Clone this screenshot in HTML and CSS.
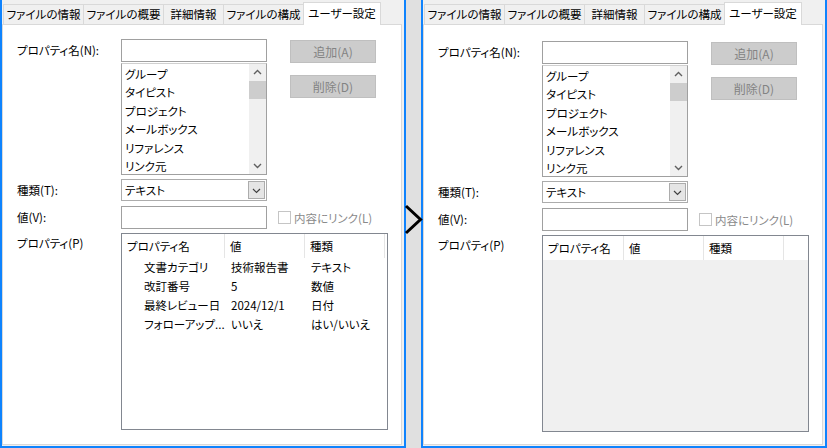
FILE: index.html
```html
<!DOCTYPE html>
<html lang="ja">
<head>
<meta charset="utf-8">
<title>ユーザー設定</title>
<link rel="stylesheet" href="styles.css">
</head>
<body>
  <section class="panel">
    <div class="tabs">
      <div class="tab tab-w80">ファイルの情報</div>
      <div class="tab tab-w80">ファイルの概要</div>
      <div class="tab tab-w60">詳細情報</div>
      <div class="tab tab-w80">ファイルの構成</div>
      <div class="tab tab-active">ユーザー設定</div>
    </div>
    <div class="content">
      <div class="form">
        <div class="label row1">プロパティ名(N):</div>
        <div class="textbox row1"></div>
        <div class="btn btn-add">追加(A)</div>
        <div class="listbox">
          <ul class="listbox-items">
            <li>グループ</li>
            <li>タイピスト</li>
            <li>プロジェクト</li>
            <li>メールボックス</li>
            <li>リファレンス</li>
            <li>リンク元</li>
          </ul>
          <div class="vscroll">
            <div class="vscroll-arrow"><svg width="17" height="17" viewBox="0 0 17 17"><path d="M5 10 L8.5 6.5 L12 10" fill="none" stroke="#606060" stroke-width="1.4"/></svg></div>
            <div class="vscroll-thumb"></div>
            <div class="vscroll-track"></div>
            <div class="vscroll-arrow"><svg width="17" height="17" viewBox="0 0 17 17"><path d="M5 7 L8.5 10.5 L12 7" fill="none" stroke="#606060" stroke-width="1.4"/></svg></div>
          </div>
        </div>
        <div class="btn btn-del">削除(D)</div>
        <div class="label row3">種類(T):</div>
        <div class="combo row3">
          <span class="combo-text">テキスト</span>
          <span class="combo-btn"><svg width="15" height="17" viewBox="0 0 15 17"><path d="M4 7 L7.5 10.5 L11 7" fill="none" stroke="#404040" stroke-width="1.2"/></svg></span>
        </div>
        <div class="label row4">値(V):</div>
        <div class="textbox row4"></div>
        <div class="check row4"><span class="check-box"></span><span class="check-label">内容にリンク(L)</span></div>
        <div class="label row5">プロパティ(P)</div>
        <div class="listview row5">
          <div class="lv-row lv-head">
            <div class="lv-cell col-name-wide">プロパティ名</div>
            <div class="lv-cell col-80">値</div>
            <div class="lv-cell col-80">種類</div>
          </div>
          <div class="lv-row">
            <div class="lv-cell col-name-wide indent">文書カテゴリ</div>
            <div class="lv-cell col-80">技術報告書</div>
            <div class="lv-cell col-80">テキスト</div>
          </div>
          <div class="lv-row">
            <div class="lv-cell col-name-wide indent">改訂番号</div>
            <div class="lv-cell col-80">5</div>
            <div class="lv-cell col-80">数値</div>
          </div>
          <div class="lv-row">
            <div class="lv-cell col-name-wide indent">最終レビュー日</div>
            <div class="lv-cell col-80">2024/12/1</div>
            <div class="lv-cell col-80">日付</div>
          </div>
          <div class="lv-row">
            <div class="lv-cell col-name-wide indent">フォローアップ...</div>
            <div class="lv-cell col-80">いいえ</div>
            <div class="lv-cell col-80">はい/いいえ</div>
          </div>
        </div>
      </div>
    </div>
  </section>

  <section class="panel panel-right">
    <div class="tabs">
      <div class="tab tab-w80">ファイルの情報</div>
      <div class="tab tab-w80">ファイルの概要</div>
      <div class="tab tab-w60">詳細情報</div>
      <div class="tab tab-w80">ファイルの構成</div>
      <div class="tab tab-active">ユーザー設定</div>
    </div>
    <div class="content">
      <div class="form">
        <div class="label row1">プロパティ名(N):</div>
        <div class="textbox row1"></div>
        <div class="btn btn-add">追加(A)</div>
        <div class="listbox">
          <ul class="listbox-items">
            <li>グループ</li>
            <li>タイピスト</li>
            <li>プロジェクト</li>
            <li>メールボックス</li>
            <li>リファレンス</li>
            <li>リンク元</li>
          </ul>
          <div class="vscroll">
            <div class="vscroll-arrow"><svg width="17" height="17" viewBox="0 0 17 17"><path d="M5 10 L8.5 6.5 L12 10" fill="none" stroke="#606060" stroke-width="1.4"/></svg></div>
            <div class="vscroll-thumb"></div>
            <div class="vscroll-track"></div>
            <div class="vscroll-arrow"><svg width="17" height="17" viewBox="0 0 17 17"><path d="M5 7 L8.5 10.5 L12 7" fill="none" stroke="#606060" stroke-width="1.4"/></svg></div>
          </div>
        </div>
        <div class="btn btn-del">削除(D)</div>
        <div class="label row3">種類(T):</div>
        <div class="combo row3">
          <span class="combo-text">テキスト</span>
          <span class="combo-btn"><svg width="15" height="17" viewBox="0 0 15 17"><path d="M4 7 L7.5 10.5 L11 7" fill="none" stroke="#404040" stroke-width="1.2"/></svg></span>
        </div>
        <div class="label row4">値(V):</div>
        <div class="textbox row4"></div>
        <div class="check row4"><span class="check-box"></span><span class="check-label">内容にリンク(L)</span></div>
        <div class="label row5">プロパティ(P)</div>
        <div class="listview listview-empty row5">
          <div class="lv-row lv-head">
            <div class="lv-cell col-81">プロパティ名</div>
            <div class="lv-cell col-80">値</div>
            <div class="lv-cell col-80">種類</div>
          </div>
        </div>
      </div>
    </div>
  </section>

  <svg class="chevron" width="22" height="34" viewBox="0 0 22 34"><path d="M4 3 L18.5 16.5 L4 30" fill="none" stroke="#000" stroke-width="3"/></svg>
</body>
</html>
```

FILE: styles.css
```css
html, body {
  margin: 0;
  padding: 0;
}
body {
  position: relative;
  width: 827px;
  height: 448px;
  overflow: hidden;
  background: #e0e0e0;
  display: flex;
  gap: 15px;
  font-family: "Noto Sans CJK JP", "Noto Sans", sans-serif;
  font-feature-settings: "palt";
  font-size: 11.5px;
  color: #000;
}
.panel {
  width: 406px;
  height: 448px;
  box-sizing: border-box;
  border: 2px solid #0f83fd;
  border-top: 0;
  background: #f0f0f0;
  display: flex;
  flex-direction: column;
}
.tabs {
  display: flex;
  align-items: flex-end;
  height: 24px;
  padding-left: 1px;
  flex: none;
}
.tab {
  box-sizing: border-box;
  height: 20px;
  border: 1px solid #d9d9d9;
  border-bottom: 0;
  margin-right: -1px;
  background: #f0f0f0;
  text-align: center;
  line-height: 19px;
  white-space: nowrap;
}
.tab-w80 { width: 81px; }
.tab-w60 { width: 61px; }
.tab-active {
  width: 78px;
  height: 23px;
  margin-bottom: -1px;
  background: #fff;
  position: relative;
  z-index: 1;
  line-height: 21px;
}
.content {
  flex: 1;
  margin: 0 2px 1px 0;
  border: 1px solid #d9d9d9;
  background: #fff;
}
.form {
  display: grid;
  grid-template-columns: 104px 146px 23px 98px;
  align-items: start;
  padding: 14px 0 0 14px;
}
.panel-right .form {
  padding-top: 16px;
}
.label {
  grid-column: 1;
  white-space: nowrap;
}
.row1 { grid-row: 1; }
.row3 { grid-row: 3; margin-top: 4px; }
.row4 { grid-row: 4; margin-top: 5px; }
.row5 { grid-row: 5; margin-top: 4px; }
.label.row1 { line-height: 23px; }
.label.row3 { line-height: 22px; }
.label.row4 { line-height: 23px; }
.label.row5 { line-height: 20px; }
.textbox {
  grid-column: 2;
  box-sizing: border-box;
  height: 23px;
  border: 1px solid #a0a0a0;
  background: #fff;
}
.btn {
  grid-column: 4;
  box-sizing: border-box;
  width: 86px;
  height: 23px;
  border: 1px solid #bfbfbf;
  background: #cccccc;
  color: #838383;
  text-align: center;
  line-height: 21px;
  font-size: 12px;
}
.btn-add { grid-row: 1; margin-top: 1px; }
.btn-del { grid-row: 2; margin-top: 12px; }
.listbox {
  grid-column: 2;
  grid-row: 2;
  box-sizing: border-box;
  height: 112px;
  border: 1px solid #a0a0a0;
  border-top-color: #d0d0d0;
  display: flex;
  background: #fff;
}
.listbox-items {
  flex: 1;
  margin: 0;
  padding: 1px 0 0 3px;
  list-style: none;
  overflow: hidden;
}
.listbox-items li {
  line-height: 18.4px;
  white-space: nowrap;
}
.vscroll {
  width: 17px;
  display: flex;
  flex-direction: column;
  background: #f0f0f0;
}
.vscroll-arrow {
  height: 17px;
  flex: none;
}
.vscroll-arrow svg { display: block; }
.vscroll-thumb {
  height: 18px;
  background: #cdcdcd;
  flex: none;
}
.vscroll-track { flex: 1; }
.combo {
  grid-column: 2;
  box-sizing: border-box;
  height: 22px;
  border: 1px solid #acacac;
  background: #fff;
  display: flex;
  align-items: center;
  justify-content: space-between;
  padding: 0 1px 0 3px;
}
.combo-text { line-height: 20px; }
.combo-btn {
  box-sizing: border-box;
  width: 17px;
  height: 18px;
  border: 1px solid #acacac;
  background: #e5e5e5;
  display: flex;
  align-items: center;
  justify-content: center;
}
.combo-btn svg { display: block; }
.check {
  grid-column: 3 / span 2;
  height: 23px;
  display: flex;
  align-items: center;
  padding-left: 11px;
}
.check-box {
  box-sizing: border-box;
  width: 13px;
  height: 13px;
  border: 1px solid #c5c5c5;
  background: #fff;
  margin-right: 3px;
}
.check-label {
  color: #8a8a8a;
  white-space: nowrap;
}
.listview {
  grid-column: 2 / span 3;
  box-sizing: border-box;
  width: 267px;
  height: 197px;
  border: 1px solid #828790;
  background: #fff;
}
.listview-empty {
  background: #f0f0f0;
}
.lv-row {
  display: flex;
  height: 19px;
  line-height: 19px;
}
.lv-head {
  height: 24px;
  line-height: 24px;
  background: #fff;
}
.lv-cell {
  box-sizing: border-box;
  padding-left: 6px;
  white-space: nowrap;
}
.lv-head .lv-cell {
  border-right: 1px solid #e5e5e5;
  padding-left: 5px;
}
.col-name-wide { width: 103px; }
.col-81 { width: 81px; }
.col-80 { width: 80px; }
.indent { padding-left: 22px; }
.chevron {
  position: absolute;
  left: 402px;
  top: 203px;
}
```
